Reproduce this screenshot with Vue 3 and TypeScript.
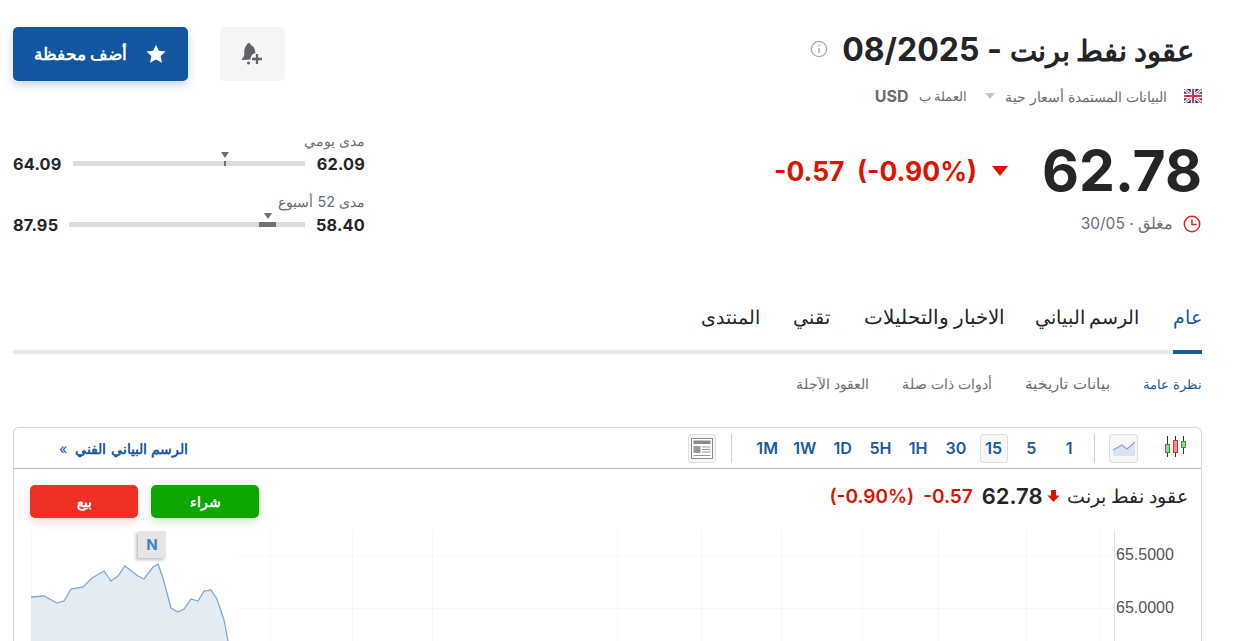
<script setup lang="ts">
import { computed } from "vue";

interface RangeRow {
  label: string;
  low: string;
  high: string;
  trackWidth: number;
  fillStart: number;
  fillWidth: number;
  marker: number;
}

const ranges: RangeRow[] = [
  { label: "مدى يومي", low: "62.09", high: "64.09", trackWidth: 232, fillStart: 151, fillWidth: 2, marker: 152 },
  { label: "مدى 52 أسبوع", low: "58.40", high: "87.95", trackWidth: 236, fillStart: 190, fillWidth: 17, marker: 199 },
];

const tabs = ["عام", "الرسم البياني", "الاخبار والتحليلات", "تقني", "المنتدى"];
const subTabs = ["نظرة عامة", "بيانات تاريخية", "أدوات ذات صلة", "العقود الآجلة"];
const periods = ["1", "5", "15", "30", "1H", "5H", "1D", "1W", "1M"];

// traced from the reference, in page coordinates
const trace: [number, number][] = [
  [31, 597], [44, 596], [57, 603], [64, 601], [71, 589], [83, 587], [92, 578], [104, 571],
  [111, 581], [118, 576], [125, 566], [138, 576], [144, 579], [153, 567], [158, 564], [163, 578],
  [171, 608], [178, 612], [184, 609], [191, 599], [198, 601], [204, 591], [211, 590], [217, 599],
  [224, 620], [228, 641],
];
const chartTop = 530;
const chartLeft = 14;

const linePoints = computed(() =>
  trace.map(([x, y]) => `${x - chartLeft},${y - chartTop}`).join(" ")
);
const areaPoints = computed(() => `${linePoints.value} ${228 - chartLeft},111 ${31 - chartLeft},111`);

const gridX = [17, 256, 338, 418, 603, 687, 767, 848, 924, 1012, 1085];
const gridY = [25, 78];
</script>

<template>
  <div class="page" dir="rtl">
    <header class="head">
      <div class="titleBlock">
        <div class="titleRow">
          <h1><span class="titleName">عقود نفط برنت</span> - 08/2025</h1>
          <svg class="info" width="18" height="18" viewBox="0 0 18 18">
            <circle cx="9" cy="9" r="7.6" fill="none" stroke="#a9a9a9" stroke-width="1.3" />
            <rect x="8.3" y="8" width="1.4" height="5" fill="#a9a9a9" />
            <rect x="8.3" y="5" width="1.4" height="1.5" fill="#a9a9a9" />
          </svg>
        </div>
        <div class="metaRow">
          <svg width="18" height="14" viewBox="0 0 18 14">
            <rect width="18" height="14" fill="#2b3f86" />
            <path d="M0 0 18 14M18 0 0 14" stroke="#fff" stroke-width="3" />
            <path d="M0 0 18 14M18 0 0 14" stroke="#d8324a" stroke-width="1" />
            <path d="M9 0V14M0 7H18" stroke="#fff" stroke-width="4.4" />
            <path d="M9 0V14M0 7H18" stroke="#d8324a" stroke-width="2.2" />
          </svg>
          <span class="metaText">البيانات المستمدة أسعار حية</span>
          <span class="metaCaret"></span>
          <span class="metaText currencyLabel">العملة ب</span>
          <b class="metaCurrency">USD</b>
        </div>
      </div>
      <div class="actions">
        <button class="alertBtn" aria-label="alert">
          <svg width="24" height="24" viewBox="0 0 24 24">
            <path d="M6 2.5C6.5 1 8.5.5 9.500 2l.6 1.200c2 .8 3.300 2.500 3.800 5l.6 2.800a6 6 0 0 0-5 6.500L1.500 18c-.8 0-1-.8-.5-1.300 1.800-1.500 2.600-3.500 2.300-6-.3-3 .5-5.700 2.700-8.200Z" fill="#5f6267" />
            <circle cx="7.500" cy="21" r="1.500" fill="#5f6267" />
            <path d="M16 12V22M11 17H21" stroke="#5f6267" stroke-width="2.300" />
          </svg>
        </button>
        <button class="watchBtn">
          <svg width="22" height="22" viewBox="0 0 24 24">
            <path d="M12 1.800 15.100 8.500 22.400 9.300 17 14.300 18.500 21.500 12 17.900 5.500 21.500 7 14.300 1.600 9.300 8.900 8.500Z" fill="#fff" />
          </svg>
          <span>أضف محفظة</span>
        </button>
      </div>
    </header>

    <section class="quote">
      <div class="priceBlock">
        <div class="priceRow">
          <span class="price" dir="ltr">62.78</span>
          <span class="downCaret"></span>
          <span class="change" dir="ltr">-0.57 &nbsp;(-0.90%)</span>
        </div>
        <div class="statusRow">
          <svg width="18" height="18" viewBox="0 0 18 18">
            <circle cx="9" cy="9" r="7.700" fill="none" stroke="#d42b1e" stroke-width="1.500" />
            <path d="M9 4.500V9.500H13.500" fill="none" stroke="#d42b1e" stroke-width="1.500" />
          </svg>
          <span>مغلق · 30/05</span>
        </div>
      </div>
      <div class="rangeBlock">
        <div v-for="row in ranges" :key="row.label" class="range">
          <div class="rangeLabel">{{ row.label }}</div>
          <div class="rangeRow">
            <b>{{ row.low }}</b>
            <div class="track" :style="{ width: `${row.trackWidth}px` }" dir="ltr">
              <i class="fill" :style="{ left: `${row.fillStart}px`, width: `${row.fillWidth}px` }"></i>
              <i class="marker" :style="{ left: `${row.marker}px` }"></i>
            </div>
            <b>{{ row.high }}</b>
          </div>
        </div>
      </div>
    </section>

    <nav class="tabs">
      <a v-for="(tab, i) in tabs" :key="tab" :class="{ active: i === 0, news: i === 2 }">{{ tab }}</a>
    </nav>
    <nav class="subTabs">
      <a v-for="(tab, i) in subTabs" :key="tab" :class="{ active: i === 0, history: i === 1 }">{{ tab }}</a>
    </nav>

    <section class="card">
      <div class="toolbar">
        <svg class="candles" width="24" height="24" viewBox="0 0 24 24">
          <path d="M3.500 0V21M11.500 0V21M19.500 0V18" stroke="#333" stroke-width="1" />
          <rect x="1.500" y="8.500" width="4" height="8" fill="#93dc8c" stroke="#3f8f3a" />
          <rect x="9.500" y="4.500" width="4" height="12" fill="#ff8f8f" stroke="#c23a3a" />
          <rect x="17.500" y="5.500" width="4" height="6" fill="#93dc8c" stroke="#3f8f3a" />
        </svg>
        <button class="iconBtn lineBtn" aria-label="area chart">
          <svg width="24" height="16" viewBox="0 0 24 16">
            <path d="M1 10 10 5 15 9 23 2V16H1Z" fill="#d8e3f3" />
            <path d="M1 10 10 5 15 9 23 2" fill="none" stroke="#8fa4bd" stroke-width="1.200" />
          </svg>
        </button>
        <span class="sep"></span>
        <div class="periods">
          <button v-for="p in periods" :key="p" class="period" :class="{ on: p === '15' }">{{ p }}</button>
        </div>
        <span class="sep sepEnd"></span>
        <button class="iconBtn layoutBtn" aria-label="layout">
          <svg width="22" height="21" viewBox="0 0 22 21">
            <rect x=".5" y=".5" width="21" height="20" fill="#fff" stroke="#8a8a8a" />
            <rect x="2.500" y="2.500" width="17" height="3.500" fill="#8a8a8a" />
            <rect x="2.500" y="8" width="7" height="7" fill="#9a9a9a" />
            <path d="M11 9H19.500M11 11.500H19.500M11 14H19.500M2.500 17.500H19.500" stroke="#9a9a9a" />
          </svg>
        </button>
        <a class="techLink">الرسم البياني الفني <span>»</span></a>
      </div>

      <div class="legend">
        <div class="legendText">
          <span class="legendName">عقود نفط برنت</span>
          <svg width="13" height="14" viewBox="0 0 12 14">
            <path d="M3.500 1H8.500V6.500H12L6 13 0 6.500H3.500Z" fill="#d91400" />
          </svg>
          <b class="legendPrice" dir="ltr">62.78</b>
          <span class="legendChange" dir="ltr">-0.57</span>
          <span class="legendChange" dir="ltr">(-0.90%)</span>
        </div>
        <div class="trade">
          <button class="buy">شراء</button>
          <button class="sell">بيع</button>
        </div>
      </div>

      <div class="chart" dir="ltr">
        <svg width="1187" height="111" viewBox="0 0 1187 111">
          <path v-for="x in gridX" :key="x" :d="`M${x + .5} 0V111`" stroke="#f5f6f9" />
          <path v-for="y in gridY" :key="y" :d="`M225 ${y + .5}H1100`" stroke="#f6f7f9" />
          <polygon :points="areaPoints" fill="#e3ebf3" />
          <polyline :points="linePoints" fill="none" stroke="#7fa9d0" stroke-width="1.300" />
          <path d="M1100.500 0V111" stroke="#dfe3e8" />
          <text x="1102" y="30" class="axis">65.5000</text>
          <text x="1102" y="83" class="axis">65.0000</text>
        </svg>
        <span class="newsPin">N</span>
      </div>
    </section>
  </div>
</template>

<style scoped>
.page {
  height: 641px;
  box-sizing: border-box;
  padding: 27px 38px 0 13px;
  overflow: hidden;
  background: #fff;
  color: #232526;
  font-family: Inter, sans-serif;
}

button {
  font-family: inherit;
  border: 0;
  padding: 0;
  cursor: pointer;
}

.head {
  display: flex;
  justify-content: space-between;
  align-items: flex-start;
}

.titleRow {
  display: flex;
  align-items: center;
  gap: 14px;
  height: 46px;
  padding-right: 8px;
}

h1 {
  margin: 0;
  font-size: 32px;
  font-weight: 700;
  line-height: 44px;
}

.titleName {
  font-size: 28.500px;
}

.info {
  margin-top: -3px;
}

.metaRow {
  display: flex;
  align-items: center;
  gap: 8px;
  height: 20px;
  margin-top: 13px;
  font-size: 14px;
  color: #6a6d73;
}

.metaRow svg {
  margin-left: 9px;
}

.metaCaret {
  width: 0;
  height: 0;
  margin: 0 2px 0 10px;
  border: 5px solid transparent;
  border-top: 6px solid #c5c5c5;
  border-bottom: 0;
}

.currencyLabel {
  font-size: 13px;
}

.metaCurrency {
  font-size: 16px;
  margin-right: 2px;
}

.actions {
  display: flex;
  gap: 32px;
}

.alertBtn {
  width: 65px;
  height: 54px;
  display: flex;
  align-items: center;
  justify-content: center;
  background: #f5f5f6;
  border-radius: 5px;
}

.watchBtn {
  width: 175px;
  height: 54px;
  display: flex;
  align-items: center;
  justify-content: center;
  gap: 18px;
  color: #fff;
  font-size: 16.500px;
  font-weight: 700;
  background: #1256a0;
  border-radius: 5px;
  box-shadow: 0 4px 10px rgba(18, 86, 160, 0.25);
}

.quote {
  display: flex;
  justify-content: space-between;
  margin-top: 43px;
}

.priceBlock {
  margin-top: -13px;
}

.priceRow {
  display: flex;
  align-items: center;
}

.price {
  font-size: 57px;
  font-weight: 700;
  line-height: 70px;
}

.downCaret {
  width: 0;
  height: 0;
  margin: 0 34px 0 15px;
  border: 8px solid transparent;
  border-top: 10px solid #d91400;
  border-bottom: 0;
}

.change {
  font-size: 26.500px;
  font-weight: 700;
  color: #d91400;
}

.statusRow {
  display: flex;
  align-items: center;
  gap: 10px;
  margin-top: 8px;
  font-size: 15.500px;
  color: #6a6d73;
}

.statusRow svg {
  margin-right: 1px;
}

.rangeBlock {
  display: flex;
  flex-direction: column;
  gap: 17px;
  width: 352px;
  margin-top: -17px;
}

.rangeLabel {
  font-size: 14.400px;
  color: #6a6d73;
  line-height: 18px;
}

.rangeRow {
  display: flex;
  align-items: center;
  justify-content: space-between;
  height: 25px;
  margin-top: 1px;
}

.rangeRow b {
  font-size: 16.300px;
  font-weight: 700;
  letter-spacing: 0.2px;
}

.track {
  position: relative;
  height: 5px;
  background: #dcdcdc;
}

.fill {
  position: absolute;
  top: 0;
  bottom: 0;
  background: #6f7175;
}

.marker {
  position: absolute;
  top: -9px;
  width: 0;
  height: 0;
  margin-left: -4px;
  border: 4px solid transparent;
  border-top: 6px solid #6f7175;
  border-bottom: 0;
}

.tabs {
  display: flex;
  gap: 33.500px;
  margin-top: 65px;
  height: 52px;
  box-sizing: border-box;
  border-bottom: 4px solid #e9e9e9;
  font-size: 18.500px;
  font-weight: 500;
}

.tabs a {
  height: 52px;
  box-sizing: border-box;
  line-height: 30px;
}

.tabs a.news {
  margin-right: -4px;
  font-size: 20.400px;
}

.tabs a.active {
  min-width: 28px;
  color: #1a5a9e;
  border-bottom: 4px solid #1a5a9e;
}

.subTabs {
  display: flex;
  gap: 33px;
  margin-top: 20px;
  font-size: 14px;
  line-height: 20px;
  color: #6a6d73;
}

.subTabs a.active {
  color: #1a5a9e;
  font-size: 13px;
}

.subTabs a.history {
  font-size: 15px;
  word-spacing: 1px;
}

.card {
  position: relative;
  margin-top: 33px;
  border: 1px solid #d6d6d6;
  border-bottom: 0;
  border-radius: 6px 6px 0 0;
}

.toolbar {
  display: flex;
  align-items: center;
  height: 40px;
  padding-right: 13px;
  border-bottom: 1px solid #b9b9b9;
}

.candles {
  margin-left: 26px;
}

.iconBtn {
  display: flex;
  align-items: center;
  justify-content: center;
  background: #f7f7f7;
  border: 1px solid #ddd;
  border-radius: 3px;
  box-sizing: border-box;
}

.lineBtn {
  width: 29px;
  height: 29px;
  margin-left: 14px;
}

.sep {
  width: 1px;
  height: 29px;
  background: #cfcfcf;
}

.periods {
  display: flex;
  margin: 0 6px 0 16px;
  direction: rtl;
}

.period {
  width: 27.750px;
  height: 29px;
  margin: 0 5px;
  color: #1a5a9e;
  font-size: 16px;
  font-weight: 600;
  background: transparent;
  border: 1px solid transparent;
  border-radius: 3px;
  box-sizing: border-box;
}

.period.on {
  background: #f7f7f7;
  border-color: #ddd;
}

.layoutBtn {
  width: 28px;
  height: 29px;
  margin-right: 15px;
}

.techLink {
  margin-right: auto;
  margin-left: 45px;
  font-size: 14.300px;
  word-spacing: 0.500px;
  font-weight: 600;
  color: #1a5a9e;
}

.techLink span {
  margin-right: 4px;
  font-weight: 400;
}

.legend {
  display: flex;
  justify-content: space-between;
  align-items: flex-start;
  height: 61px;
  padding: 16px 13px 0 16px;
  box-sizing: border-box;
}

.legendText {
  display: flex;
  align-items: center;
  gap: 5px;
  height: 22px;
  font-size: 18.600px;
}

.legendName {
  margin-left: 2px;
}

.legendPrice {
  font-size: 22px;
  font-weight: 600;
  margin-right: -1px;
}

.legendChange {
  font-size: 19px;
  font-weight: 600;
  color: #d91400;
  margin-right: 4px;
}

.trade {
  display: flex;
  gap: 13px;
}

.trade button {
  width: 108px;
  height: 33px;
  border-radius: 5px;
  color: #fff;
  font-size: 14px;
  font-weight: 700;
}

.buy {
  background: #0ea600;
  box-shadow: 0 4px 10px rgba(14, 166, 0, 0.2);
}

.sell {
  background: #ee3124;
  box-shadow: 0 4px 10px rgba(238, 49, 36, 0.2);
}

.chart {
  position: relative;
  height: 111px;
}

.chart svg {
  display: block;
}

.axis {
  font-family: "Liberation Sans", Arial, sans-serif;
  font-size: 16px;
  fill: #555;
}

.newsPin {
  position: absolute;
  left: 124px;
  top: 1px;
  width: 28px;
  height: 27px;
  text-align: center;
  font-size: 15px;
  line-height: 27px;
  font-weight: 700;
  color: #3f83c4;
  background: #e6e6e6;
  box-shadow: -2px 2px 3px rgba(0, 0, 0, 0.25);
}
</style>

<style>
html,
body {
  margin: 0;
  overflow: hidden;
  background: #fff;
}
</style>
